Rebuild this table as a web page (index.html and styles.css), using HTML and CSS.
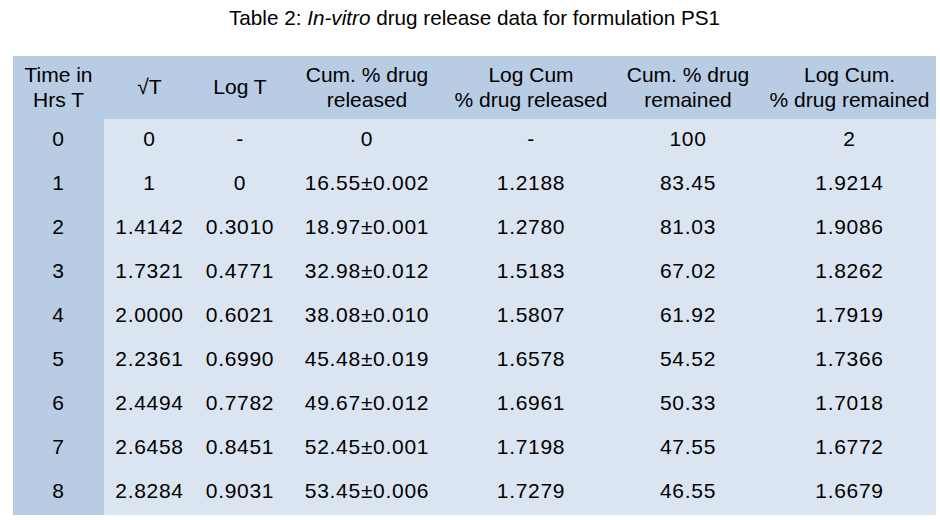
FILE: index.html
```html
<!DOCTYPE html>
<html>
<head>
<meta charset="utf-8">
<link rel="stylesheet" href="styles.css">
</head>
<body>
<div class="page">
  <div class="caption">Table 2: <i>In-vitro</i> drug release data for formulation PS1</div>
  <table class="data">
    <colgroup>
      <col class="c1"><col class="c2"><col class="c3"><col class="c4"><col class="c5"><col class="c6"><col class="c7">
    </colgroup>
    <thead>
      <tr>
        <th>Time in<br>Hrs T</th>
        <th>√T</th>
        <th>Log T</th>
        <th>Cum. % drug<br>released</th>
        <th>Log Cum<br>% drug released</th>
        <th>Cum. % drug<br>remained</th>
        <th>Log Cum.<br>% drug remained</th>
      </tr>
    </thead>
    <tbody>
      <tr><td class="first">0</td><td>0</td><td>-</td><td>0</td><td>-</td><td>100</td><td>2</td></tr>
      <tr><td class="first">1</td><td>1</td><td>0</td><td>16.55±0.002</td><td>1.2188</td><td>83.45</td><td>1.9214</td></tr>
      <tr><td class="first">2</td><td>1.4142</td><td>0.3010</td><td>18.97±0.001</td><td>1.2780</td><td>81.03</td><td>1.9086</td></tr>
      <tr><td class="first">3</td><td>1.7321</td><td>0.4771</td><td>32.98±0.012</td><td>1.5183</td><td>67.02</td><td>1.8262</td></tr>
      <tr><td class="first">4</td><td>2.0000</td><td>0.6021</td><td>38.08±0.010</td><td>1.5807</td><td>61.92</td><td>1.7919</td></tr>
      <tr><td class="first">5</td><td>2.2361</td><td>0.6990</td><td>45.48±0.019</td><td>1.6578</td><td>54.52</td><td>1.7366</td></tr>
      <tr><td class="first">6</td><td>2.4494</td><td>0.7782</td><td>49.67±0.012</td><td>1.6961</td><td>50.33</td><td>1.7018</td></tr>
      <tr><td class="first">7</td><td>2.6458</td><td>0.8451</td><td>52.45±0.001</td><td>1.7198</td><td>47.55</td><td>1.6772</td></tr>
      <tr><td class="first">8</td><td>2.8284</td><td>0.9031</td><td>53.45±0.006</td><td>1.7279</td><td>46.55</td><td>1.6679</td></tr>
    </tbody>
  </table>
</div>
</body>
</html>
```

FILE: styles.css
```css
html, body {
  margin: 0;
  padding: 0;
  background: #ffffff;
}

.page {
  padding: 5px 0 0 13px;
  width: 923px;
  font-family: "Liberation Sans", Arial, sans-serif;
  color: #000000;
}

.caption {
  text-align: center;
  font-size: 20.7px;
  line-height: 25px;
  height: 25px;
  margin-bottom: 26px;
}

.data {
  width: 923px;
  border-collapse: collapse;
  border-spacing: 0;
  table-layout: fixed;
  font-size: 21px;
}

.c1 { width: 91px; }
.c2 { width: 91px; }
.c3 { width: 90px; }
.c4 { width: 164px; }
.c5 { width: 164px; }
.c6 { width: 150px; }
.c7 { width: 173px; }

.data th {
  background: #b8cce4;
  font-weight: normal;
  line-height: 25px;
  height: 63px;
  padding: 0 0 2px 0;
  box-sizing: border-box;
  text-align: center;
  vertical-align: middle;
  white-space: nowrap;
}

.data td {
  background: #dbe5f1;
  height: 44px;
  padding: 0 0 4px 0;
  box-sizing: border-box;
  text-align: center;
  vertical-align: middle;
  line-height: 24px;
  letter-spacing: 0.7px;
  white-space: nowrap;
}

.data td.first {
  background: #b8cce4;
}
```
